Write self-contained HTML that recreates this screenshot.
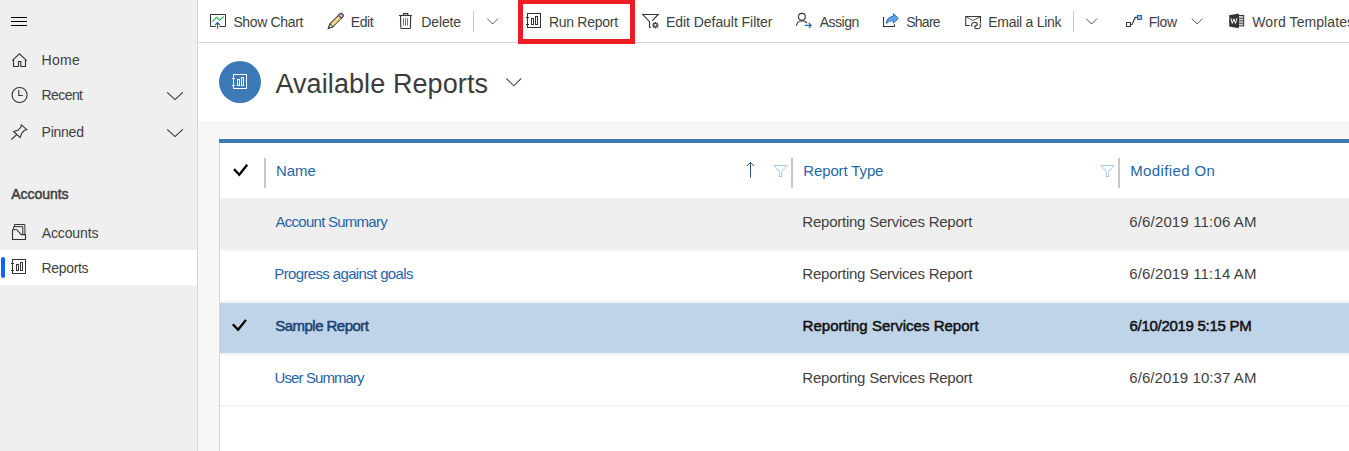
<!DOCTYPE html>
<html><head><meta charset="utf-8"><title>Available Reports</title>
<style>
html,body{margin:0;padding:0;}
body{width:1349px;height:451px;overflow:hidden;position:relative;background:#fff;font-family:"Liberation Sans",sans-serif;}
.a{position:absolute;}
.t{position:absolute;white-space:nowrap;line-height:1;font-family:"Liberation Sans",sans-serif;}
#side{left:0;top:0;width:197px;height:451px;background:#efefef;border-right:1px solid #d4d4d4;}
#sel{left:0;top:250px;width:197px;height:35px;background:#fff;}
#pill{left:1px;top:257px;width:4px;height:21px;border-radius:2px;background:#0f62fe;}
#tbar{left:198px;top:0;width:1151px;height:42px;background:#fff;border-bottom:1px solid #d8d8d8;}
#content{left:198px;top:121px;width:1151px;height:330px;background:#f8f7f6;}
#grid{left:219px;top:139px;width:1130px;height:312px;background:#fff;border-left:1px solid #d4d4d4;box-sizing:border-box;}
#gtop{left:219px;top:139px;width:1130px;height:4px;background:#3b79b7;}
.row{left:220px;width:1129px;}
.sep{left:220px;width:1129px;height:2px;background:#f4f4f4;}
.div{width:2px;top:158px;height:30px;background:#c8c8c8;}
#red{left:518px;top:-1px;width:117px;height:45px;box-sizing:border-box;border:5px solid #ed1c24;}
#circ{left:219px;top:61px;width:42px;height:42px;border-radius:50%;background:#3b79b7;}
svg{position:absolute;left:0;top:0;overflow:visible;}
</style></head><body>
<div class="a" id="side"></div>
<div class="a" id="sel"></div>
<div class="a" id="pill"></div>
<div class="a" id="tbar"></div>
<div class="a" id="content"></div>
<div class="a" id="grid"></div>
<div class="a" id="gtop"></div>
<div class="a row" style="top:198px;height:51px;background:#efefef"></div>
<div class="a sep" style="top:249px"></div>
<div class="a sep" style="top:301px"></div>
<div class="a row" style="top:303px;height:50px;background:#c0d4e9"></div>
<div class="a sep" style="top:353px"></div>
<div class="a sep" style="top:405px"></div>
<div class="a div" style="left:264px"></div>
<div class="a div" style="left:791px"></div>
<div class="a div" style="left:1118px"></div>
<div class="a" style="left:473px;top:11px;width:1px;height:21px;background:#c8c8c8"></div>
<div class="a" style="left:1073px;top:11px;width:1px;height:21px;background:#c8c8c8"></div>
<div class="a" id="circ"></div>
<svg width="1349" height="451" viewBox="0 0 1349 451" fill="none" stroke-linecap="butt" stroke-linejoin="miter">
<!-- hamburger -->
<g stroke="#000" stroke-width="1">
<path d="M11 17.5H27M11 21.5H27M11 25.5H27"/>
</g>
<!-- home -->
<g stroke="#333" stroke-width="1.1">
<path d="M12.2 60.7L19.4 53.8L26.7 60.7"/>
<path d="M13.5 59.6V66.5H18.5V61.5H20.8V66.5H25.5V59.6"/>
</g>
<!-- clock -->
<g stroke="#333" stroke-width="1.1">
<circle cx="19.6" cy="95" r="7.5"/>
<path d="M18.8 90V95.5H22.8"/>
</g>
<!-- pin -->
<g stroke="#333" stroke-width="1.1">
<path d="M21.3 124.9L26.8 129.7L24.4 130.3L21.7 133.3L20.2 137.6L13.6 131.4L17.9 130.2L20.8 127.3Z"/>
<path d="M16.8 134.5L11.2 139.7"/>
</g>
<!-- sidebar chevrons -->
<g stroke="#333" stroke-width="1.1">
<path d="M167.2 92.3L175 99.6L182.8 92.3"/>
<path d="M167.2 129.3L175 136.6L182.8 129.3"/>
</g>
<!-- accounts icon -->
<g stroke="#333" stroke-width="1.1">
<path d="M12.5 229.7H16.7L21.3 234.6H25.5V239.5H12.5Z"/>
<path d="M13.6 229.7V226.6H22.8V234.6" stroke-width="1"/>
<path d="M14.5 226.6V224.5H24.9V234.6" stroke-width="1"/>
</g>
<!-- reports icon (sidebar) -->
<g stroke="#333" stroke-width="1">
<rect x="12.5" y="259.5" width="13" height="14"/>
<path d="M11 263.5H14M11 270.5H14"/>
<rect x="16.5" y="264.5" width="2" height="6"/>
<rect x="20.5" y="262.5" width="2" height="8"/>
</g>
<!-- circle icon (white) -->
<g stroke="#fff" stroke-width="1">
<rect x="233.5" y="74.5" width="13" height="14"/>
<path d="M232 78.5H235M232 85.5H235"/>
<rect x="237.5" y="79.5" width="2" height="6"/>
<rect x="241.5" y="77.5" width="2" height="8"/>
</g>
<!-- title chevron -->
<path d="M506.3 78.4L513.8 85.8L521.3 78.4" stroke="#444" stroke-width="1.1"/>
<!-- show chart -->
<g stroke-width="1">
<path d="M215.8 26.5H210.5V14.5H225.5V26.5H219.3" stroke="#333"/>
<path d="M212.4 21.7L216.4 17.3L219.6 20.2L223.6 16.5" stroke="#2fb45a" stroke-width="1.1"/>
<path d="M217.5 28.7V22.6M215.1 25L217.5 22.5L219.9 25" stroke="#1a67b3" stroke-width="1.2"/>
</g>
<!-- pencil -->
<g transform="translate(328.3 28.4) rotate(-45)">
<path d="M0 0L4.4 -2.1H18.2A2.1 2.1 0 0 1 18.2 2.1H4.4Z" fill="#f8d88f" stroke="#444" stroke-width="1"/>
<path d="M16.2 -2H18.2A2 2 0 0 1 18.2 2H16.2Z" fill="#dca3e6" stroke="#444" stroke-width="1"/>
<path d="M0 0L4.4 -2V2Z" fill="#fff" stroke="#444" stroke-width="1"/>
<path d="M0 0L2 -0.9V0.9Z" fill="#444" stroke="none"/>
</g>
<!-- trash -->
<g stroke="#333" stroke-width="1.1">
<path d="M398.9 15.5H411.9"/>
<path d="M403.4 15.5V13.6H407.8V15.5"/>
<path d="M400.5 15.5L400.8 27.4Q400.8 28.5 402 28.5H409.2Q410.4 28.5 410.4 27.4L410.7 15.5"/>
<path d="M403.5 18.2V25.6M405.5 18.2V25.6M407.5 18.2V25.6" stroke="#666" stroke-width="0.9"/>
</g>
<!-- toolbar chevrons -->
<g stroke="#555" stroke-width="1">
<path d="M487.2 18.6L492.6 24L498 18.6"/>
<path d="M1086.2 18.6L1091.6 24L1097 18.6"/>
<path d="M1191.8 18.6L1197.2 24L1202.6 18.6"/>
</g>
<!-- run report -->
<g stroke="#333" stroke-width="1">
<rect x="527.5" y="13.5" width="13" height="14"/>
<path d="M526 17.5H529M526 24.5H529"/>
<rect x="531.5" y="18.5" width="2" height="6"/>
<rect x="535.5" y="16.5" width="2" height="8"/>
</g>
<!-- edit default filter -->
<g stroke="#333" stroke-width="1.1">
<path d="M651.2 27.2H649.5V21.7L642.8 14.5H658.2L652.2 20.9"/>
<circle cx="655.4" cy="25.2" r="1.7" stroke-width="1.2"/>
<path d="M655.4 22V23.2M655.4 27.2V28.4M652.2 25.2H653.4M657.4 25.2H658.6M653.1 22.9L654 23.8M656.8 26.6L657.7 27.5M657.7 22.9L656.8 23.8M654 26.6L653.1 27.5" stroke-width="1.3"/>
</g>
<!-- assign -->
<g stroke="#333" stroke-width="1.1">
<circle cx="801.9" cy="16.8" r="3.4"/>
<path d="M796.5 25.8Q796.9 20.9 801.9 20.8Q805.6 20.9 806.9 23.3"/>
<path d="M805 25.4H811.1M808.8 23L811.2 25.4L808.8 27.8" stroke="#1a67b3" stroke-width="1.2"/>
</g>
<!-- share -->
<g>
<path d="M883.5 17.1V26.5H894.5V24.2" stroke="#333" stroke-width="1.1"/>
<path d="M893.4 13.6L898.3 18.4L893.4 23.2V20.6Q888.6 20.4 886.3 23.6Q886.4 17.2 893.4 16.2Z" fill="#62a3e2" stroke="#1a67b3" stroke-width="0.9" stroke-linejoin="round"/>
</g>
<!-- email a link -->
<g stroke="#3a3a3a" stroke-width="1.1">
<path d="M969.8 25.5H965.7V16.5H980.5V23.4"/>
<path d="M966.3 17L972.9 20.5L979.9 17" stroke="#555" stroke-width="1"/>
<path d="M972.2 26.5C970.6 24.6 972.2 22.4 974.6 22.3C976.8 22.2 978 23.6 977.2 24.8C976.7 25.5 975.9 25.9 975.2 25.6" stroke="#444" stroke-width="1.2"/>
<path d="M979.6 24.2C981.6 25.6 980.6 28.4 977.8 28.7C975.4 28.9 974 27.4 974.9 26.2C975.4 25.5 976.2 25.1 977 25.4" stroke="#444" stroke-width="1.2"/>
</g>
<!-- flow -->
<g stroke="#333" stroke-width="1">
<rect x="1126.5" y="22.5" width="4" height="4"/>
<path d="M1130.8 24.5H1132L1135.2 17.4H1137.2" stroke-width="1.1"/>
<rect x="1137.5" y="15.5" width="4" height="4" fill="#8ec0ee" stroke="#1a67b3"/>
</g>
<!-- word -->
<g>
<rect x="1238.5" y="15.5" width="5.2" height="10.4" fill="#d0d0d0" stroke="#333" stroke-width="1"/>
<path d="M1239 18.3H1243.4M1239 20.8H1243.4M1239 23.3H1243.4" stroke="#444" stroke-width="0.9"/>
<path d="M1229.2 15.2L1238.8 13.5V28.3L1229.2 26.6Z" fill="#333"/>
<path d="M1230.9 18.3L1232.3 23.4L1233.9 18.8L1235.5 23.4L1236.9 18.3" stroke="#fff" stroke-width="1"/>
</g>
<!-- grid header check -->
<path d="M234 169.1L239.3 174.7L247.2 164.8" stroke="#000" stroke-width="2.3"/>
<!-- row check -->
<path d="M232.8 324.2L238.1 329.8L246 319.9" stroke="#000" stroke-width="2.3"/>
<!-- sort arrow -->
<path d="M750.5 177.7V162.6M747 166L750.5 162.4L754 166" stroke="#2a4f8f" stroke-width="1"/>
<!-- filters -->
<g stroke="#a9c6e2" stroke-width="1">
<path d="M773.9 165.5H787.1L781.8 171.2V176.5H779.2V171.2Z"/>
<path d="M1100.9 165.5H1114.1L1108.8 171.2V176.5H1106.2V171.2Z"/>
</g>
</svg>

<span class="t" id="tb_show" style="left:233.40px;top:15.00px;font-size:14px;font-weight:400;color:#3f3f3f;letter-spacing:-0.356px">Show Chart</span>
<span class="t" id="tb_edit" style="left:350.70px;top:15.00px;font-size:14px;font-weight:400;color:#3f3f3f;letter-spacing:-0.400px">Edit</span>
<span class="t" id="tb_del" style="left:421.30px;top:15.00px;font-size:14px;font-weight:400;color:#3f3f3f;letter-spacing:-0.140px">Delete</span>
<span class="t" id="tb_run" style="left:548.90px;top:15.00px;font-size:14px;font-weight:400;color:#3f3f3f;letter-spacing:-0.272px">Run Report</span>
<span class="t" id="tb_edf" style="left:666.00px;top:15.00px;font-size:14px;font-weight:400;color:#3f3f3f;letter-spacing:-0.053px">Edit Default Filter</span>
<span class="t" id="tb_asg" style="left:819.70px;top:15.00px;font-size:14px;font-weight:400;color:#3f3f3f;letter-spacing:-0.490px">Assign</span>
<span class="t" id="tb_shr" style="left:906.20px;top:15.00px;font-size:14px;font-weight:400;color:#3f3f3f;letter-spacing:-0.737px">Share</span>
<span class="t" id="tb_eml" style="left:988.30px;top:15.00px;font-size:14px;font-weight:400;color:#3f3f3f;letter-spacing:-0.268px">Email a Link</span>
<span class="t" id="tb_flow" style="left:1148.70px;top:15.00px;font-size:14px;font-weight:400;color:#3f3f3f;letter-spacing:-0.400px">Flow</span>
<span class="t" id="tb_word" style="left:1252.30px;top:15.00px;font-size:14px;font-weight:400;color:#3f3f3f;letter-spacing:0.083px">Word Templates</span>
<span class="t" id="sb_home" style="left:41.60px;top:53.00px;font-size:14px;font-weight:400;color:#3f3f3f;letter-spacing:0.250px">Home</span>
<span class="t" id="sb_rec" style="left:41.60px;top:88.00px;font-size:14px;font-weight:400;color:#3f3f3f;letter-spacing:-0.600px">Recent</span>
<span class="t" id="sb_pin" style="left:41.60px;top:125.00px;font-size:14px;font-weight:400;color:#3f3f3f;letter-spacing:-0.250px">Pinned</span>
<span class="t" id="sb_acch" style="left:11.25px;top:187.00px;font-size:14px;font-weight:400;color:#3f3f3f;letter-spacing:-0.036px;-webkit-text-stroke:0.5px #3f3f3f">Accounts</span>
<span class="t" id="sb_acc" style="left:41.80px;top:226.00px;font-size:14px;font-weight:400;color:#3f3f3f;letter-spacing:-0.143px">Accounts</span>
<span class="t" id="sb_rep" style="left:41.60px;top:261.00px;font-size:14px;font-weight:400;color:#3f3f3f;letter-spacing:-0.333px">Reports</span>
<span class="t" id="title" style="left:275.40px;top:71.00px;font-size:27px;font-weight:400;color:#3c3c3c;letter-spacing:0.094px">Available Reports</span>
<span class="t" id="h_name" style="left:275.90px;top:163.00px;font-size:15px;font-weight:400;color:#1f66a9;letter-spacing:-0.000px">Name</span>
<span class="t" id="h_type" style="left:803.25px;top:163.00px;font-size:15px;font-weight:400;color:#1f66a9;letter-spacing:-0.125px">Report Type</span>
<span class="t" id="h_mod" style="left:1130.25px;top:163.00px;font-size:15px;font-weight:400;color:#1f66a9;letter-spacing:0.375px">Modified On</span>
<span class="t" id="r1_name" style="left:275.60px;top:214.00px;font-size:15px;font-weight:400;color:#1f66a9;letter-spacing:-0.750px">Account Summary</span>
<span class="t" id="r2_name" style="left:274.35px;top:266.00px;font-size:15px;font-weight:400;color:#1f66a9;letter-spacing:-0.643px">Progress against goals</span>
<span class="t" id="r3_name" style="left:275.35px;top:318.00px;font-size:15px;font-weight:400;color:#1b4172;letter-spacing:-0.542px;-webkit-text-stroke:0.5px #1b4172">Sample Report</span>
<span class="t" id="r4_name" style="left:274.60px;top:370.00px;font-size:15px;font-weight:400;color:#1f66a9;letter-spacing:-0.909px">User Summary</span>
<span class="t" id="r1_type" style="left:802.35px;top:214.00px;font-size:15px;font-weight:400;color:#3f3f3f;letter-spacing:-0.242px">Reporting Services Report</span>
<span class="t" id="r2_type" style="left:802.35px;top:266.00px;font-size:15px;font-weight:400;color:#3f3f3f;letter-spacing:-0.242px">Reporting Services Report</span>
<span class="t" id="r3_type" style="left:802.60px;top:318.00px;font-size:15px;font-weight:400;color:#111111;letter-spacing:0.008px;-webkit-text-stroke:0.5px #111111">Reporting Services Report</span>
<span class="t" id="r4_type" style="left:802.35px;top:370.00px;font-size:15px;font-weight:400;color:#3f3f3f;letter-spacing:-0.242px">Reporting Services Report</span>
<span class="t" id="r1_mod" style="left:1129.25px;top:214.00px;font-size:15px;font-weight:400;color:#3f3f3f;letter-spacing:0.153px">6/6/2019 11:06 AM</span>
<span class="t" id="r2_mod" style="left:1129.25px;top:266.00px;font-size:15px;font-weight:400;color:#3f3f3f;letter-spacing:0.153px">6/6/2019 11:14 AM</span>
<span class="t" id="r3_mod" style="left:1129.50px;top:318.00px;font-size:15px;font-weight:400;color:#111111;letter-spacing:-0.284px;-webkit-text-stroke:0.5px #111111">6/10/2019 5:15 PM</span>
<span class="t" id="r4_mod" style="left:1129.25px;top:370.00px;font-size:15px;font-weight:400;color:#3f3f3f;letter-spacing:0.075px">6/6/2019 10:37 AM</span>
<div class="a" id="red"></div>
</body></html>
